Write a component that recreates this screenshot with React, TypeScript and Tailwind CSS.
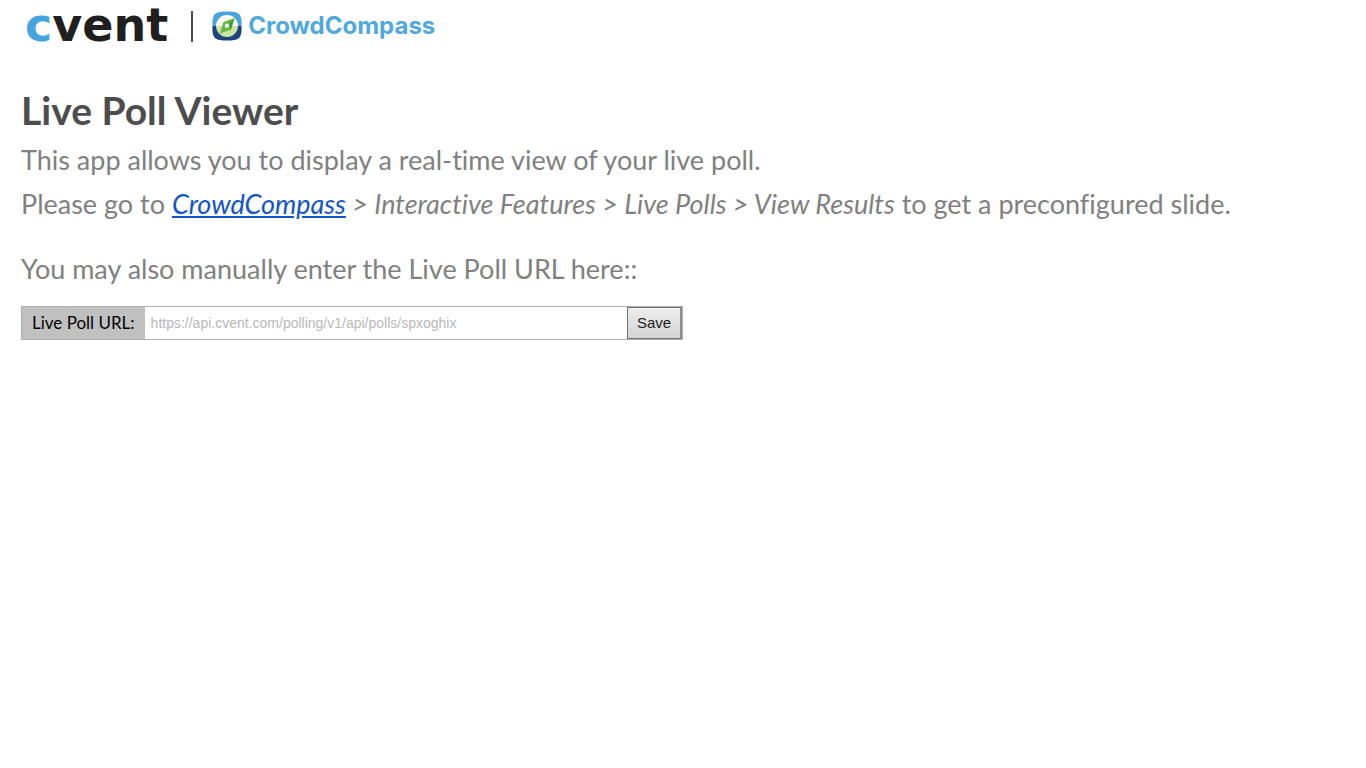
function CompassMark() {
  return (
    <svg viewBox="0 0 30 30" className="size-[30px] shrink-0" aria-hidden="true">
      <path d="M0.5 15C0.2 10 .5 6 2.5 3.5C5 .8 10 .5 15 .5S25 .8 27.5 3.5C29.5 6 29.8 10 29.5 15Z" fill="#48a5dd" />
      <path d="M.5 15C.2 20 .5 24 2.5 26.5C5 29.2 10 29.5 15 29.5S25 29.2 27.5 26.5C29.5 24 29.8 20 29.5 15Z" fill="#1c4380" />
      <path d="M4 15A11 11 0 0 1 26 15Z" fill="#fafdf4" />
      <path d="M4 15A11 11 0 0 0 26 15Z" fill="#c9e3a0" />
      <path d="M22.5 7L11.5 11L8 22.5L19 18.5Z" fill="#66b545" />
      <path d="M22.5 7L19 18.5L15 15Z" fill="#3f9a3d" />
      <circle cx="15" cy="14.7" r="2.2" fill="#f4faea" />
    </svg>
  );
}

export default function App() {
  return (
    <div className="px-[21px] font-['Lato','Liberation_Sans',sans-serif] text-[#808080] [font-variant-ligatures:none]">
      <header className="flex h-[52px] items-center pl-1">
        <span className="pb-0.5 font-['DejaVu_Sans',sans-serif] text-[46px] leading-12 font-bold text-[#1f1f1f]">
          <span className="text-[#45a5df]">c</span>vent
        </span>
        <span className="ml-[23px] h-[31px] w-0.5 bg-[#4a4a4a]" />
        <span className="ml-[19px] flex items-center gap-1.5">
          <CompassMark />
          <span className="font-['Inter',sans-serif] text-[24px] leading-8 font-bold text-[#4fa9dc]">CrowdCompass</span>
        </span>
      </header>
      <main>
        <h1 className="mt-[34px] text-[39px] leading-12 font-bold text-[#4d4d4d]">Live Poll Viewer</h1>
        <p className="mt-1 text-[27px] leading-11">This app allows you to display a real-time view of your live poll.</p>
        <p className="text-[27px] leading-11">
          Please go to{" "}
          <em>
            <a href="#crowdcompass" className="text-[#1155cc] underline">CrowdCompass</a>
            {" > Interactive Features > Live Polls > View Results"}
          </em>{" "}
          to get a preconfigured slide.
        </p>
        <p className="mt-[21px] text-[27px] leading-11">You may also manually enter the Live Poll URL here::</p>
        <form className="mt-[15px] flex h-[34px] w-full max-w-[662px] border border-[#b0b0b0]" onSubmit={(e) => e.preventDefault()}>
          <label htmlFor="poll-url" className="flex shrink-0 items-center bg-[#c0c0c0] px-2.5 text-[17px] text-black">
            Live Poll URL:
          </label>
          <input
            id="poll-url"
            type="text"
            placeholder="https://api.cvent.com/polling/v1/api/polls/spxoghix"
            className="min-w-0 flex-1 bg-white px-1.5 font-['Liberation_Sans',sans-serif] text-sm text-black outline-none placeholder:text-[#b8b8b8]"
          />
          <button
            type="submit"
            className="w-[55px] shrink-0 border border-r-2 border-[#707070] border-r-[#909090] bg-linear-to-b from-[#eeeeee] to-[#d4d4d4] font-['Liberation_Sans',sans-serif] text-[15px] text-[#1a1a1a]"
          >
            Save
          </button>
        </form>
      </main>
    </div>
  );
}
